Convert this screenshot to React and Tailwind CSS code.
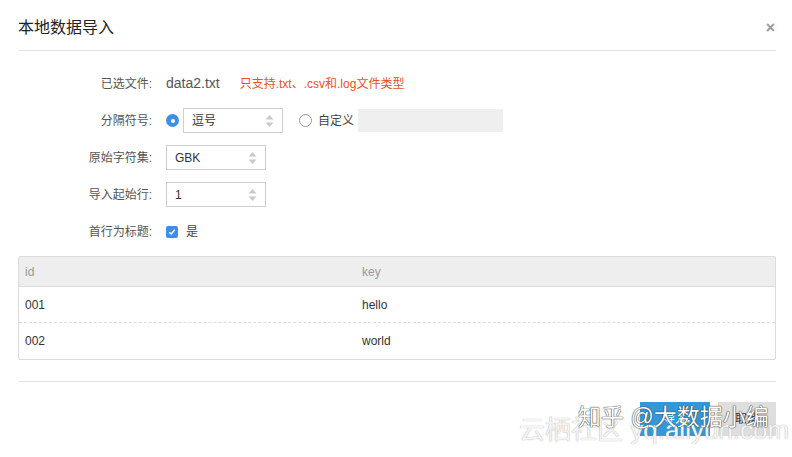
import React from 'react';

const font = { fontFamily: '"Liberation Sans", "Noto Sans CJK SC", sans-serif' };

// small up/down caret pair used by the select / number boxes
function Spinner() {
  return (
    <svg width="9" height="14" viewBox="0 0 9 14" className="shrink-0">
      <path d="M4.5 1 L8.5 5.5 L0.5 5.5 Z" fill="#c9c9c9" />
      <path d="M4.5 13 L8.5 8.5 L0.5 8.5 Z" fill="#c9c9c9" />
    </svg>
  );
}

function Row({ label, children }) {
  return (
    <div className="flex items-center h-[37px]">
      <div className="w-[134px] text-right text-[12px] text-[#555]">{label}:</div>
      <div className="ml-[14px] flex items-center">{children}</div>
    </div>
  );
}

function SelectBox({ value, className = '' }) {
  return (
    <div className={`w-[100px] h-[25px] border border-[#cfcfcf] bg-white flex items-center justify-between pl-[8px] pr-[8px] text-[12px] text-[#333] ${className}`}>
      <span>{value}</span>
      <Spinner />
    </div>
  );
}

export default function App() {
  const rows = [
    { id: '001', key: 'hello' },
    { id: '002', key: 'world' },
  ];

  return (
    <div className="relative w-[792px] h-[457px] bg-white overflow-hidden" style={font}>
      {/* header */}
      <div className="ml-[18px] mr-[16px] h-[51px] flex items-center justify-between border-b border-[#e3e3e3]">
        <h1 className="text-[16px] text-[#222] pt-[6px]">本地数据导入</h1>
        <span className="text-[#999] text-[16px] font-bold pt-[6px] mr-[1px]">×</span>
      </div>

      {/* form */}
      <div className="mt-[14px] px-[18px]">
        <Row label="已选文件">
          <span className="text-[14px] text-[#555]">data2.txt</span>
          <span className="ml-[20px] text-[12px] text-[#e8501f]">只支持.txt、.csv和.log文件类型</span>
        </Row>
        <Row label="分隔符号">
          <span className="w-[13px] h-[13px] rounded-full bg-[#3d8ee8] flex items-center justify-center">
            <span className="w-[4px] h-[4px] rounded-full bg-white" />
          </span>
          <SelectBox value="逗号" className="ml-[4px]" />
          <span className="ml-[16px] w-[13px] h-[13px] rounded-full border border-[#9a9a9a] bg-white" />
          <span className="ml-[6px] text-[12px] text-[#444]">自定义</span>
          <div className="ml-[4px] w-[145px] h-[23px] bg-[#efefef]" />
        </Row>
        <Row label="原始字符集">
          <SelectBox value="GBK" />
        </Row>
        <Row label="导入起始行">
          <SelectBox value="1" />
        </Row>
        <Row label="首行为标题">
          <span className="w-[12px] h-[12px] rounded-[2px] bg-[#3d8ee8] flex items-center justify-center">
            <svg width="8" height="8" viewBox="0 0 8 8">
              <path d="M1.2 4.2 L3.2 6 L6.8 1.8" fill="none" stroke="#fff" strokeWidth="1.5" />
            </svg>
          </span>
          <span className="ml-[8px] text-[12px] text-[#444]">是</span>
        </Row>
      </div>

      {/* preview table */}
      <div className="ml-[18px] mr-[16px] mt-[6px] border border-[#dcdcdc] rounded-[2px] text-[12px]">
        <div className="grid grid-cols-[337px_1fr] h-[30px] items-center bg-[#eeeeee] border-b border-[#dcdcdc] text-[#999] px-[6px]">
          <span>id</span>
          <span>key</span>
        </div>
        {rows.map((r, i) => (
          <div
            key={r.id}
            className={`grid grid-cols-[337px_1fr] h-[36px] items-center px-[6px] text-[#333] ${i < rows.length - 1 ? 'border-b border-dashed border-[#dcdcdc]' : ''}`}
          >
            <span>{r.id}</span>
            <span>{r.key}</span>
          </div>
        ))}
      </div>

      {/* footer */}
      <div className="ml-[18px] mr-[16px] mt-[21px] border-t border-[#e3e3e3] pt-[20px] flex justify-end gap-[8px]">
        <button className="w-[70px] h-[34px] bg-[#3498d8] text-white text-[12px]">导入</button>
        <button className="w-[58px] h-[34px] bg-[#dedede] text-[#333] text-[12px]">取消</button>
      </div>

      {/* overlaid site marks */}
      <div className="absolute left-[519px] top-[417px] text-[26px] leading-none text-[#f4f4f4] [text-shadow:0_0_1px_#999] whitespace-nowrap">
        云栖社区 yq.aliyun.com
      </div>
      <div className="absolute left-[578px] top-[406px] text-[23px] leading-none text-white [text-shadow:0_0_1px_#222,0_0_1px_#222] whitespace-nowrap">
        知乎 @大数据小编
      </div>
    </div>
  );
}
